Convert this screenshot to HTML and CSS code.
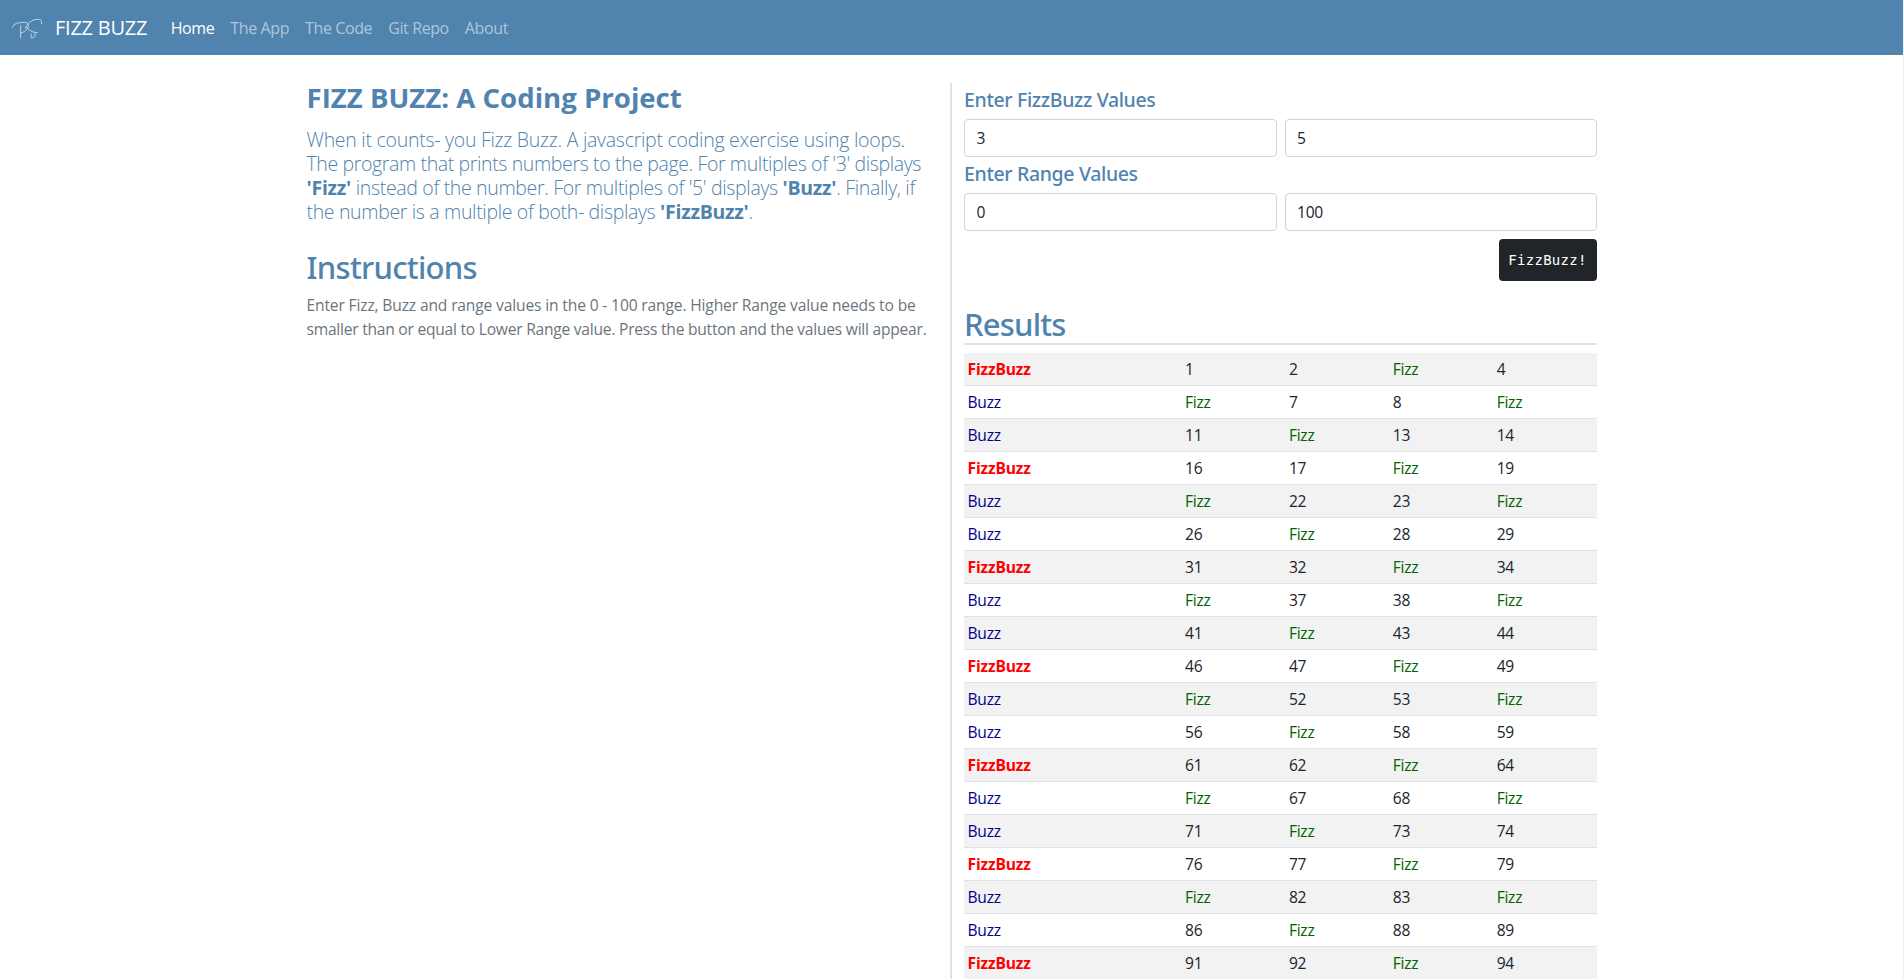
FILE: index.html
```html
<!DOCTYPE html>
<html lang="en">
<head>
<meta charset="utf-8">
<title>Fizz Buzz</title>
<link rel="stylesheet" href="styles.css">
</head>
<body>
<nav class="navbar">
  <svg class="logo" viewBox="0 0 90 60" fill="none" stroke="#fff">
    <path d="M1 26C5 14 15 10 42 10M26 19V58M24 43C37 39 49 32 49 21C49 14 45 11 41 11M39 28C47 13 58 2 76 1C86 0 91 5 88 15M41 24C51 32 60 40 72 41H77M59 43C57 48 56 54 59 57C65 57 70 52 70 43"/>
  </svg>
  <a class="brand">FIZZ BUZZ</a>
  <div class="links"><a class="active">Home</a><a>The App</a><a>The Code</a><a>Git Repo</a><a>About</a></div>
</nav>
<main class="container">
  <section class="intro">
    <h1>FIZZ BUZZ: A Coding Project</h1>
    <p class="lead"><span class="loose">When it counts- you Fizz Buzz. A javascript coding exercise using loops.</span><br><span class="tight">The program that prints numbers to the page. For multiples of '3' displays</span><br><b>'Fizz'</b> instead of the number. For multiples of '5' displays <b>'Buzz'</b>. Finally, if<br>the number is a multiple of both- displays <b>'FizzBuzz'</b>.</p>
    <h2>Instructions</h2>
    <p class="help"><span class="loose">Enter Fizz, Buzz and range values in the 0 - 100 range. Higher Range value needs to be</span><br>smaller than or equal to Lower Range value. Press the button and the values will appear.</p>
  </section>
  <section class="app">
    <h5>Enter FizzBuzz Values</h5>
    <div class="fields"><input value="3"><input value="5"></div>
    <h5>Enter Range Values</h5>
    <div class="fields"><input value="0"><input value="100"></div>
    <button>FizzBuzz!</button>
    <h2 class="results-title">Results</h2>
    <div class="results" id="results"></div>
  </section>
</main>
<script src="app.js"></script>
</body>
</html>
```
FILE: styles.css
```css
* { box-sizing: border-box; }
html { background: #f1f1f1; }
body {
  margin: 0 1px 0 0;
  height: 979px;
  overflow: hidden;
  display: flex;
  flex-direction: column;
  background: #fff;
  color: #212529;
  font: 15.6px/24px "Open Sans", sans-serif;
  letter-spacing: -0.25px;
}
h1, h2, h5, p { margin: 0; }
h1, h2, h5 { color: #5083ae; }

.navbar {
  display: flex;
  align-items: center;
  flex: none;
  height: 55px;
  padding: 0 12px 1px;
  background: #5083ae;
  color: #fff;
}
.logo { width: 30px; height: 20px; margin-top: 4px; stroke-width: 2.6; opacity: .75; overflow: visible; }
.brand { margin: 2px 15.5px 0 13px; font-size: 20px; line-height: 30px; letter-spacing: -0.25px; }
.links { display: flex; font-size: 16px; letter-spacing: -0.39px; padding-top: 1px; }
.links a { padding: 0 8px; color: rgba(255, 255, 255, .55); }
.links .active { color: #fff; }

.container { display: flex; flex: 1; padding: 28px 0 0 306.5px; }
.intro { width: 643.5px; flex: none; }
.intro h1 { font-size: 27.6px; line-height: 28px; letter-spacing: 0; margin-bottom: 16.5px; }
.lead { font-size: 19.5px; font-weight: 300; letter-spacing: -0.34px; color: #5083ae; margin-bottom: 24px; }
.lead b { font-weight: 700; letter-spacing: -0.25px; }
.lead .loose { letter-spacing: -0.27px; }
.lead .tight { letter-spacing: -0.375px; }
h2 { font: 500 31px/38px "Noto Sans", sans-serif; letter-spacing: -0.7px; }
.intro h2 { margin-bottom: 7px; }
.help { color: #6c757d; letter-spacing: -0.24px; }
.help .loose { letter-spacing: -0.15px; }

.app { width: 647px; flex: none; border-left: 2px solid #dee2e6; padding: 5px 0 0 12px; }
h5 { font: 500 19.5px/24px "Noto Sans", sans-serif; letter-spacing: -0.35px; margin-bottom: 7px; }
.fields { display: flex; gap: 8px; margin-bottom: 5px; }
input {
  flex: 1;
  min-width: 0;
  height: 38px;
  padding: 6px 12px 6px 11.5px;
  border: 1px solid #ced4da;
  border-radius: 4px;
  color: #212529;
  font: inherit;
  letter-spacing: inherit;
}
button {
  display: block;
  width: 98px;
  height: 42px;
  margin: 8px 0 24px auto;
  padding: 0 1px 1px 0;
  border: 0;
  border-radius: 4px;
  background: #212529;
  color: #fff;
  font: 14px "DejaVu Sans Mono", monospace;
  letter-spacing: .3px;
}
.results-title { height: 40px; letter-spacing: -0.8px; border-bottom: 2px solid #dee2e6; margin-bottom: 8px; }
.row {
  display: grid;
  grid-template-columns: 217.5px repeat(4, 1fr);
  height: 33px;
  padding: 4px 0;
  border-bottom: 1px solid #dee2e6;
}
.row span { padding-left: 3.5px; }
.row:nth-child(odd) { background: #f2f2f2; }
.row .fizz { color: #006400; }
.row .buzz { color: #00008b; }
.row .fizzbuzz { color: #f00; font-weight: 700; letter-spacing: -0.15px; }
```
FILE: app.js
```
const out = document.getElementById('results');
for (let start = 0; start < 95; start += 5) {
  const row = document.createElement('div');
  row.className = 'row';
  for (let n = start; n < start + 5; n++) {
    const cell = document.createElement('span');
    const word = (n % 3 ? '' : 'Fizz') + (n % 5 ? '' : 'Buzz');
    cell.textContent = word || n;
    if (word) cell.className = word.toLowerCase();
    row.append(cell);
  }
  out.append(row);
}
```
